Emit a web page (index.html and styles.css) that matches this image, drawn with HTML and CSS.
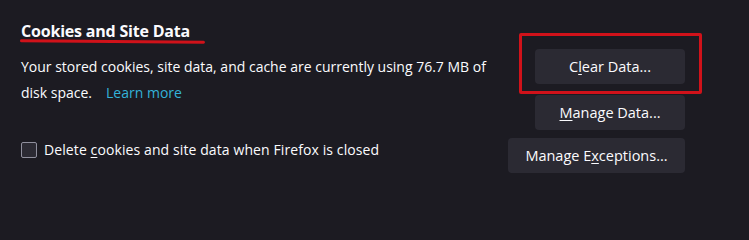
FILE: index.html
```html
<!DOCTYPE html>
<html lang="en">
<head>
<meta charset="utf-8">
<title>Cookies and Site Data</title>
<link rel="stylesheet" href="styles.css">
</head>
<body>
<section class="section">
  <h2 class="heading">Cookies and Site Data</h2>
  <div class="grid">
    <p class="desc"><span>Your stored cookies, site data, and cache are currently using 76.7 MB of</span> <span>disk space.</span><a class="link" href="#">Learn more</a></p>
    <div class="actions">
      <div class="highlight-wrap">
        <button class="btn btn-clear">C<u>l</u>ear Data...</button>
        <span class="highlight"></span>
      </div>
      <button class="btn btn-manage"><u>M</u>anage Data...</button>
    </div>
    <label class="check-row">
      <span class="checkbox"></span>
      <span class="check-label">Delete <u>c</u>ookies and site data when Firefox is closed</span>
    </label>
    <div class="actions">
      <button class="btn btn-exc">Manage E<u>x</u>ceptions...</button>
    </div>
  </div>
</section>
</body>
</html>
```
FILE: styles.css
```css
html {
  height: 217px;
  overflow: hidden;
}
html, body {
  margin: 0;
  padding: 0;
  background: #1c1b22;
}
body {
  width: 749px;
  height: 217px;
  color: #fbfbfe;
  font-family: "Open Sans", "Noto Sans", sans-serif;
  font-size: 14px;
}
.section {
  padding: 20px 64px 0 21px;
}
.heading {
  position: relative;
  display: inline-block;
  margin: 0;
  font-size: 16px;
  font-weight: 700;
  line-height: 22px;
  letter-spacing: -0.2px;
}
.heading::after {
  content: "";
  position: absolute;
  left: -1px;
  top: 20px;
  width: 185px;
  height: 3px;
  border-radius: 2px;
  background: #d0121a;
  transform: rotate(0.4deg);
}
.grid {
  display: grid;
  grid-template-columns: 1fr auto;
}
.desc {
  margin: 12px 0 0;
  line-height: 26px;
  width: 475px;
}
.link {
  color: #33b2d9;
  text-decoration: none;
  margin-left: 14px;
}
.actions {
  display: flex;
  flex-direction: column;
  align-items: flex-end;
  gap: 11px;
}
.highlight-wrap {
  position: relative;
  margin-top: 7px;
}
.highlight {
  position: absolute;
  left: -16px;
  right: -17px;
  top: -16px;
  bottom: -10px;
  border: 3px solid #d0121a;
  border-radius: 2px;
  pointer-events: none;
}
.btn {
  display: block;
  height: 35px;
  width: 150px;
  padding: 0;
  border: none;
  border-radius: 4px;
  background: #2b2a33;
  color: #fbfbfe;
  font-family: inherit;
  font-size: 14.5px;
}
.btn-exc {
  width: 177px;
  margin-top: 8px;
}
.btn u, .check-label u {
  text-underline-offset: 2px;
}
.check-row {
  display: flex;
  align-items: center;
  gap: 7px;
  margin-top: 10px;
  align-self: start;
  line-height: 20px;
}
.check-label {
  letter-spacing: 0.1px;
}
.checkbox {
  width: 14px;
  height: 14px;
  border: 1px solid #8f8f9d;
  border-radius: 2px;
  background: #2b2a33;
}
```
